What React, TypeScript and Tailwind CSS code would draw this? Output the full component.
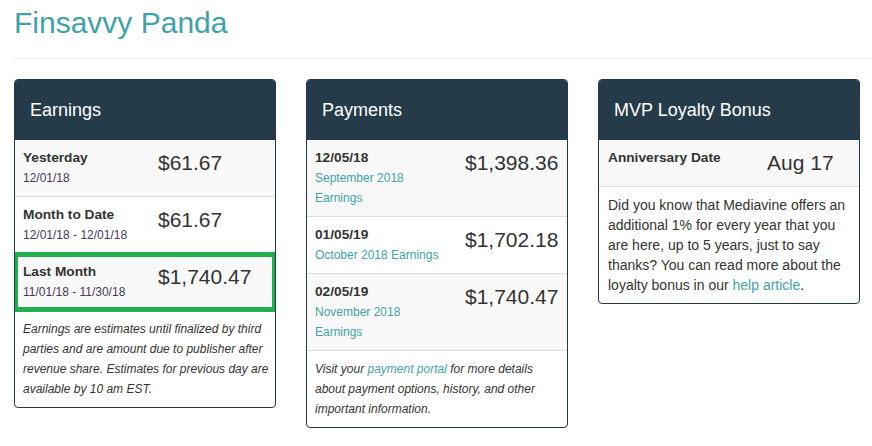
const teal = "text-[#3fa2a8]";

function Card({ title, children }: { title: string; children: React.ReactNode }) {
  return (
    <div className="w-[262px] overflow-hidden rounded-[4px] border border-[#22384a] bg-white">
      <div className="flex h-[60px] items-center bg-[#253b49] px-[15px] text-[18px] text-white">
        {title}
      </div>
      {children}
    </div>
  );
}

interface EarningRow {
  label: string;
  range: string;
  amount: string;
}

const earnings: EarningRow[] = [
  { label: "Yesterday", range: "12/01/18", amount: "$61.67" },
  { label: "Month to Date", range: "12/01/18 - 12/01/18", amount: "$61.67" },
  { label: "Last Month", range: "11/01/18 - 11/30/18", amount: "$1,740.47" },
];

const payments = [
  { date: "12/05/18", note: "September 2018 Earnings", amount: "$1,398.36" },
  { date: "01/05/19", note: "October 2018 Earnings", amount: "$1,702.18" },
  { date: "02/05/19", note: "November 2018 Earnings", amount: "$1,740.47" },
];

export default function App() {
  return (
    <div className="min-h-screen bg-white pl-[14px] pt-[5px] font-['Liberation_Sans',Arial,sans-serif] text-[#333]">
      <h1 className={`text-[30px] leading-[36px] ${teal}`}>Finsavvy Panda</h1>
      <hr className="mt-[17px] border-t border-[#eeeeee]" />

      <div className="mt-[20px] flex items-start gap-[30px]">
        {/* Earnings */}
        <Card title="Earnings">
          {earnings.map((row, i) => (
            <div
              key={row.label}
              className={`grid grid-cols-[120px_1fr] gap-x-[15px] px-[8px] py-[8px] ${
                i % 2 === 0 ? "bg-[#f9f9f9]" : "bg-white"
              } ${i < earnings.length - 1 ? "border-b border-[#dddddd]" : ""} ${
                i === 2 ? "outline-[5px] -outline-offset-[3px] outline-[#21b04b] outline-solid" : ""
              }`}
            >
              <div>
                <div className="text-[13.7px] font-bold leading-[20px]">{row.label}</div>
                <div className="whitespace-nowrap text-[12px] leading-[20px] text-[#46385b]">
                  {row.range}
                </div>
              </div>
              <div className="text-[21px] leading-[30px]">{row.amount}</div>
            </div>
          ))}
          <p className="pb-[8px] pl-[8px] pr-[2px] pt-[9px] text-[12px] italic leading-[20px]">
            Earnings are estimates until finalized by third parties and are amount due to
            publisher after revenue share. Estimates for previous day are available by 10 am
            EST.
          </p>
        </Card>

        {/* Payments */}
        <Card title="Payments">
          {payments.map((row, i) => (
            <div
              key={row.date}
              className={`grid grid-cols-[128px_1fr] gap-x-[22px] border-b border-[#dddddd] px-[8px] py-[8px] ${
                i % 2 === 0 ? "bg-[#f9f9f9]" : "bg-white"
              }`}
            >
              <div>
                <div className="text-[13.7px] font-bold leading-[20px]">{row.date}</div>
                <div className={`text-[12px] leading-[20px] ${teal}`}>{row.note}</div>
              </div>
              <div className="text-[21px] leading-[30px]">{row.amount}</div>
            </div>
          ))}
          <p className="px-[8px] py-[8px] text-[12px] italic leading-[20px]">
            Visit your <span className={teal}>payment portal</span> for more details about
            payment options, history, and other important information.
          </p>
        </Card>

        {/* MVP Loyalty Bonus */}
        <Card title="MVP Loyalty Bonus">
          <div className="grid grid-cols-[137px_1fr] gap-x-[22px] border-b border-[#dddddd] bg-[#f9f9f9] px-[9px] py-[8px]">
            <div className="text-[13.7px] font-bold leading-[20px]">Anniversary Date</div>
            <div className="text-[21px] leading-[30px]">Aug 17</div>
          </div>
          <p className="px-[9px] py-[8px] text-[14px] leading-[20px]">
            Did you know that Mediavine offers an additional 1% for every year that you are
            here, up to 5 years, just to say thanks? You can read more about the loyalty bonus
            in our <span className={teal}>help article</span>.
          </p>
        </Card>
      </div>
    </div>
  );
}
